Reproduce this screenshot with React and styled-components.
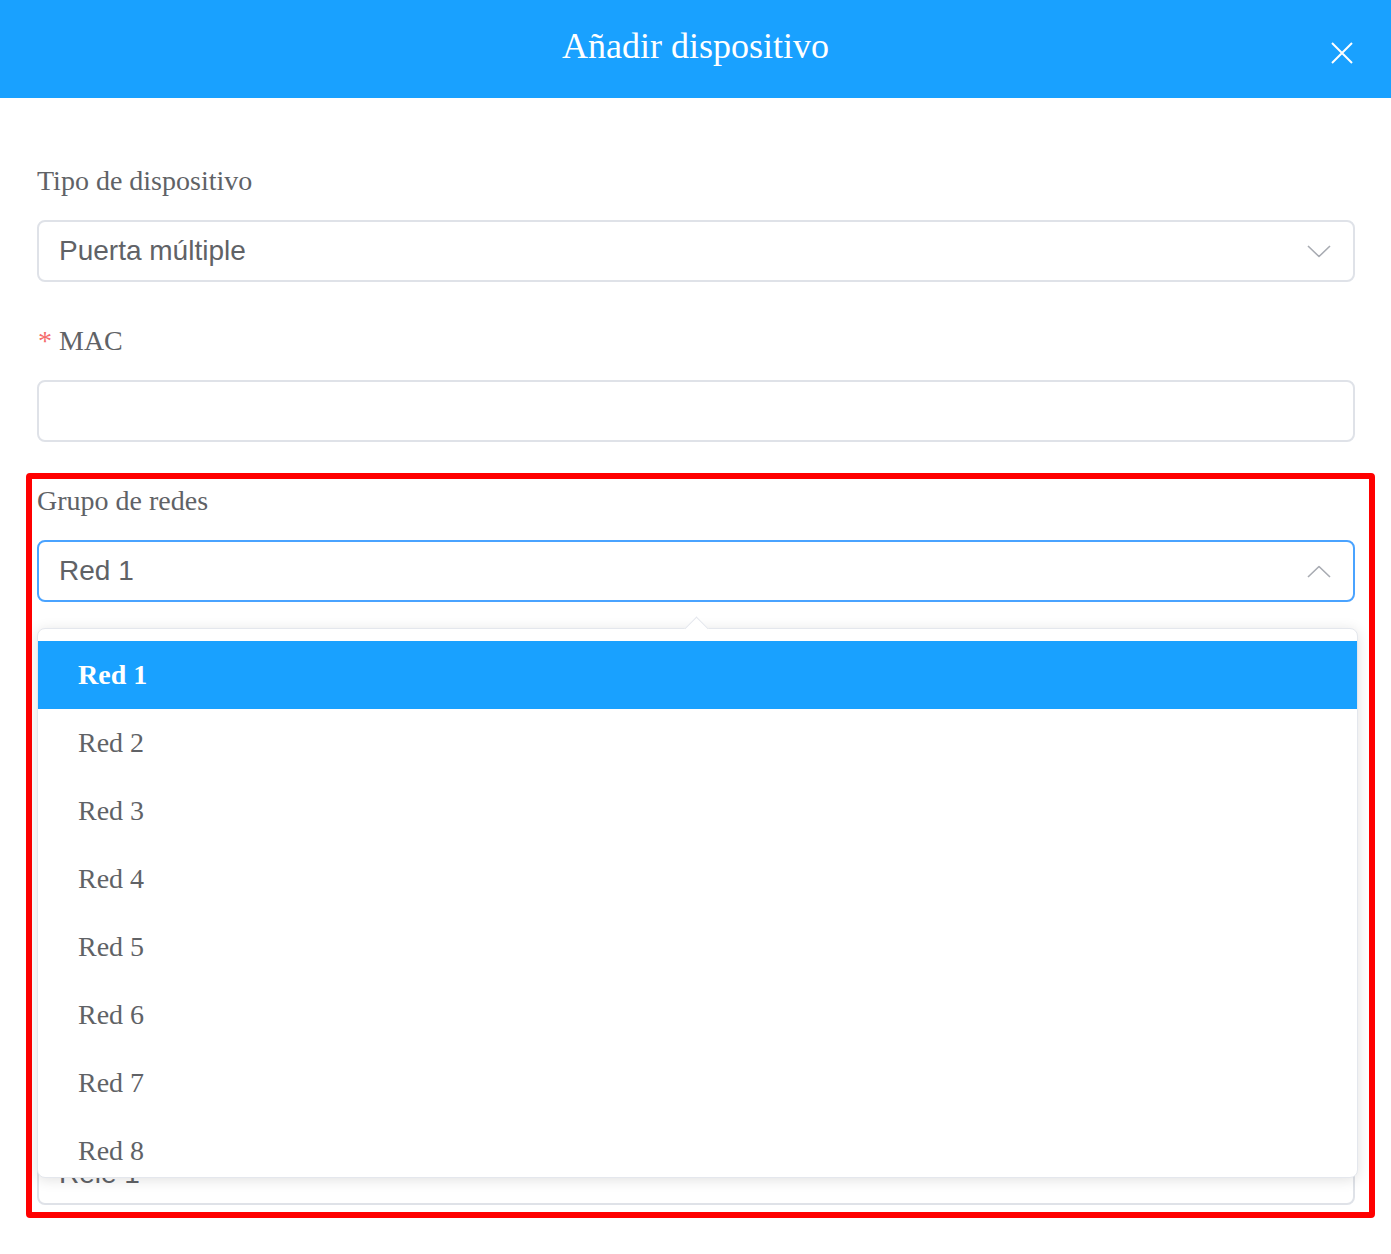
import React from "react";
import styled, { createGlobalStyle } from "styled-components";

const GlobalStyle = createGlobalStyle`
  html, body {
    margin: 0;
    padding: 0;
    background: #ffffff;
    overflow: hidden;
  }
  * {
    box-sizing: border-box;
  }
`;

const networks = ["Red 1", "Red 2", "Red 3", "Red 4", "Red 5", "Red 6", "Red 7", "Red 8", "Red 9", "Red 10"];

function Chevron({ up }) {
  return (
    <svg width="24" height="13" viewBox="0 0 24 13" fill="none">
      <polyline
        points={up ? "1,12 12,1.5 23,12" : "1,1 12,11.5 23,1"}
        stroke="#a8abb2"
        strokeWidth="1.6"
        strokeLinejoin="round"
      />
    </svg>
  );
}

function App() {
  const selected = "Red 1";

  return (
    <Dialog>
      <GlobalStyle />
      <Header>
        <Title>Añadir dispositivo</Title>
        <CloseButton aria-label="Cerrar">
          <svg width="22" height="22" viewBox="0 0 22 22">
            <path d="M1 1 L21 21 M21 1 L1 21" stroke="#ffffff" strokeWidth="2" />
          </svg>
        </CloseButton>
      </Header>

      <Form>
        <Field>
          <Label>Tipo de dispositivo</Label>
          <SelectBox>
            <Value>Puerta múltiple</Value>
            <Chevron />
          </SelectBox>
        </Field>

        <Field>
          <Label>
            <Required>*</Required>MAC
          </Label>
          <Input />
        </Field>

        <Highlight>
          <Field>
            <Label>Grupo de redes</Label>
            <SelectWrap>
              <SelectBox $focused>
                <Value>{selected}</Value>
                <Chevron up />
              </SelectBox>
              <Dropdown>
                <Arrow />
                <OptionList>
                  {networks.map((name) => (
                    <Option key={name} $active={name === selected}>
                      {name}
                    </Option>
                  ))}
                </OptionList>
              </Dropdown>
            </SelectWrap>
          </Field>

          <Field>
            <Label>Nombre</Label>
            <Input />
          </Field>

          <Field>
            <Label>Descripción</Label>
            <TextArea />
          </Field>

          <Field>
            <Label>Relé</Label>
            <Input>
              <Value>Relé 1</Value>
            </Input>
          </Field>
        </Highlight>

        <Field>
          <Label>
            <Required>*</Required>Alias
          </Label>
          <Input />
        </Field>
      </Form>
    </Dialog>
  );
}

const Dialog = styled.div`
  width: 100%;
  background: #ffffff;
`;

const Header = styled.div`
  position: relative;
  height: 98px;
  padding-bottom: 6px;
  background-color: #19a1ff;
  display: flex;
  align-items: center;
  justify-content: center;
`;

const Title = styled.h2`
  margin: 0;
  font-family: "Liberation Serif", "Times New Roman", serif;
  font-size: 36px;
  font-weight: normal;
  color: #ffffff;
`;

const CloseButton = styled.button`
  position: absolute;
  right: 38px;
  top: 42px;
  width: 22px;
  height: 22px;
  padding: 0;
  border: none;
  background: transparent;
  display: flex;
  cursor: pointer;
`;

const Form = styled.div`
  padding: 63px 36px 40px 37px;
`;

const Field = styled.div`
  margin-bottom: 39px;

  &:last-child {
    margin-bottom: 0;
  }
`;

const Label = styled.label`
  display: block;
  height: 40px;
  line-height: 40px;
  margin-bottom: 19px;
  font-family: "Liberation Serif", "Times New Roman", serif;
  font-size: 28px;
  color: #606266;
`;

const Required = styled.span`
  color: #f56c6c;
  margin-right: 7px;
  margin-left: 1px;
`;

const Input = styled.div`
  height: 62px;
  border: 2px solid #dfe2e8;
  border-radius: 8px;
  background: #ffffff;
  padding: 0 22px 0 20px;
  display: flex;
  align-items: center;
`;

const TextArea = styled.div`
  height: 185px;
  border: 2px solid #dfe2e8;
  border-radius: 8px;
  background: #ffffff;
`;

const SelectWrap = styled.div`
  position: relative;
`;

const SelectBox = styled.div`
  height: 62px;
  border: 2px solid ${(p) => (p.$focused ? "#4aa3ff" : "#dfe2e8")};
  border-radius: 8px;
  background: #ffffff;
  padding: 0 22px 0 20px;
  display: flex;
  align-items: center;
  justify-content: space-between;
`;

const Value = styled.span`
  font-family: "Liberation Sans", Arial, sans-serif;
  font-size: 28px;
  color: #606266;
`;

const Highlight = styled.div`
  position: relative;
  margin-bottom: 39px;

  &::after {
    content: "";
    position: absolute;
    top: -8px;
    left: -11px;
    right: -20px;
    bottom: -13px;
    border: 6px solid #ff0000;
    border-radius: 4px;
    pointer-events: none;
  }
`;

const Dropdown = styled.div`
  position: absolute;
  z-index: 10;
  top: calc(100% + 26px);
  left: 0;
  right: -3px;
  height: 550px;
  background: #ffffff;
  border: 1px solid #e4e7ed;
  border-radius: 8px;
  box-shadow: 0 2px 14px rgba(0, 0, 0, 0.12);
`;

const Arrow = styled.div`
  position: absolute;
  top: -9px;
  left: 50%;
  width: 17px;
  height: 17px;
  margin-left: -10px;
  background: #ffffff;
  border-top: 1px solid #e4e7ed;
  border-left: 1px solid #e4e7ed;
  transform: rotate(45deg);
`;

const OptionList = styled.ul`
  position: relative;
  list-style: none;
  margin: 0;
  padding: 12px 0 0;
  height: 100%;
  overflow: hidden;
  border-radius: 8px;
`;

const Option = styled.li`
  height: 68px;
  line-height: 68px;
  padding-left: 40px;
  font-family: "Liberation Serif", "Times New Roman", serif;
  font-size: 28px;
  font-weight: ${(p) => (p.$active ? "bold" : "normal")};
  color: ${(p) => (p.$active ? "#ffffff" : "#606266")};
  background: ${(p) => (p.$active ? "#19a1ff" : "transparent")};
`;

export default App;
